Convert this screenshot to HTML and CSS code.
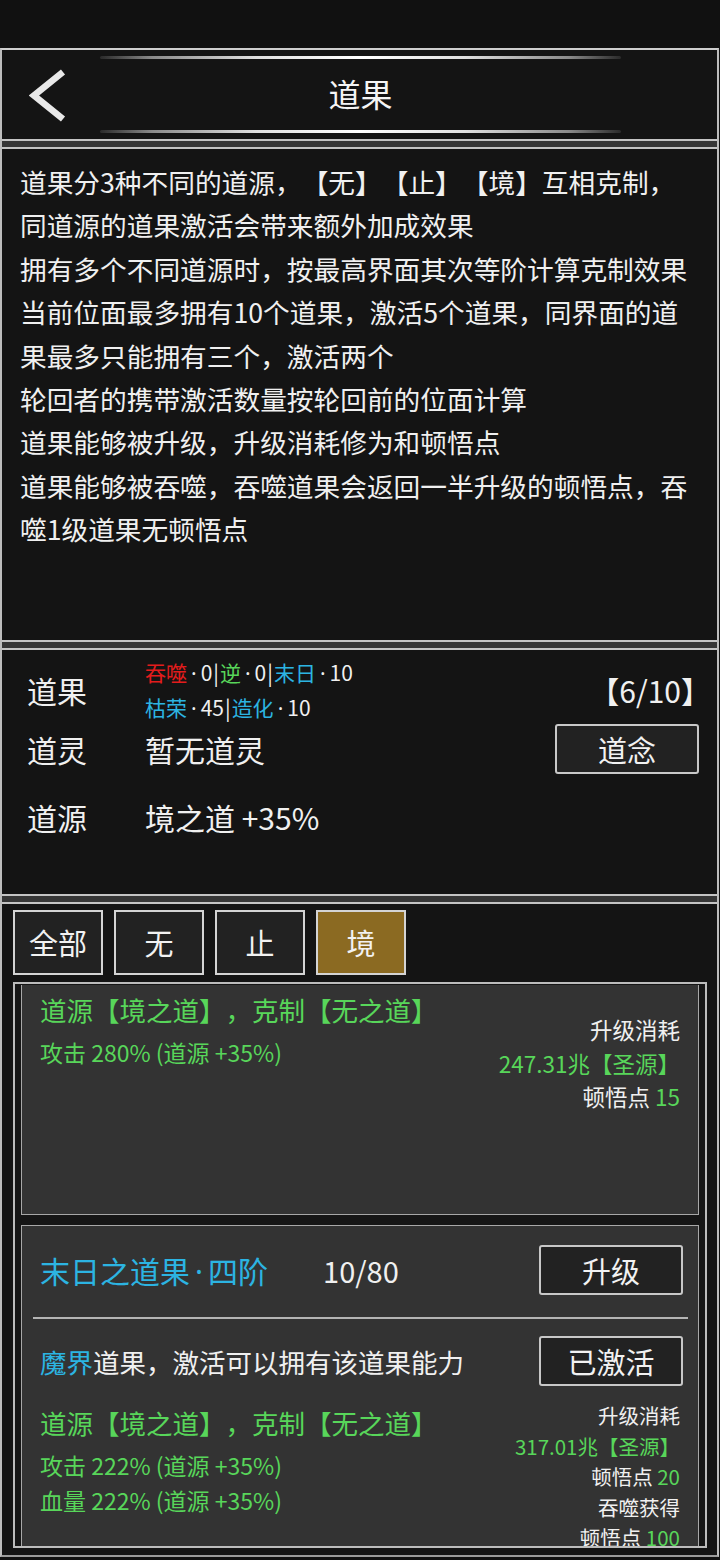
FILE: index.html
```html
<!DOCTYPE html>
<html lang="zh-CN">
<head>
<meta charset="utf-8">
<title>道果</title>
<link rel="stylesheet" href="styles.css">
</head>
<body>
<div class="status"></div>
<div class="frame">
  <header class="topbar">
    <svg class="back" width="40" height="60" viewBox="0 0 40 60">
      <polyline points="34,7 5,30.5 34,54" fill="none" stroke="#e8e8e8" stroke-width="6.5" stroke-linejoin="miter" stroke-linecap="butt"/>
    </svg>
    <div class="deco deco-top"></div>
    <h1 class="title">道果</h1>
    <div class="deco deco-bottom"></div>
  </header>
  <div class="sep"></div>
  <section class="intro">
    <p>道果分3种不同的道源，【无】【止】【境】互相克制，<br>同道源的道果激活会带来额外加成效果</p>
    <p>拥有多个不同道源时，按最高界面其次等阶计算克制效果</p>
    <p>当前位面最多拥有10个道果，激活5个道果，同界面的道<br>果最多只能拥有三个，激活两个</p>
    <p>轮回者的携带激活数量按轮回前的位面计算</p>
    <p>道果能够被升级，升级消耗修为和顿悟点</p>
    <p>道果能够被吞噬，吞噬道果会返回一半升级的顿悟点，吞<br>噬1级道果无顿悟点</p>
  </section>
  <div class="sep"></div>
  <section class="info">
    <div class="info-row row-fruit">
      <span class="label">道果</span>
      <div class="stats">
        <div><span class="red">吞噬</span><span class="dot">·</span>0<span class="bar">|</span><span class="green">逆</span><span class="dot">·</span>0<span class="bar">|</span><span class="cyan">末日</span><span class="dot">·</span>10</div>
        <div><span class="cyan">枯荣</span><span class="dot">·</span>45<span class="bar">|</span><span class="cyan">造化</span><span class="dot">·</span>10</div>
      </div>
      <span class="count">【6/10】</span>
    </div>
    <div class="info-row row-spirit">
      <span class="label">道灵</span>
      <span class="value">暂无道灵</span>
      <button class="btn">道念</button>
    </div>
    <div class="info-row row-source">
      <span class="label">道源</span>
      <span class="value">境之道 +35%</span>
    </div>
  </section>
  <div class="sep"></div>
  <section class="tabs">
    <button class="tab">全部</button>
    <button class="tab">无</button>
    <button class="tab">止</button>
    <button class="tab active">境</button>
  </section>
  <section class="list">
    <div class="card card-cut">
      <div class="detail">
        <div class="effects">
          <div class="eff-head">道源【境之道】，克制【无之道】</div>
          <div class="eff-line first">攻击 280% (道源 +35%)</div>
        </div>
        <div class="cost cost-lg">
          <div>升级消耗</div>
          <div class="green">247.31兆【圣源】</div>
          <div>顿悟点 <span class="green">15</span></div>
        </div>
      </div>
    </div>
    <div class="card">
      <div class="card-top">
        <span class="fruit-name">末日之道果<span class="tdot">·</span>四阶</span>
        <span class="level">10/80</span>
        <button class="btn">升级</button>
      </div>
      <div class="divider"></div>
      <div class="card-mid">
        <span class="desc"><span class="cyan">魔界</span>道果，激活可以拥有该道果能力</span>
        <button class="btn">已激活</button>
      </div>
      <div class="detail">
        <div class="effects">
          <div class="eff-head">道源【境之道】，克制【无之道】</div>
          <div class="eff-line first">攻击 222% (道源 +35%)</div>
          <div class="eff-line">血量 222% (道源 +35%)</div>
        </div>
        <div class="cost cost-sm">
          <div>升级消耗</div>
          <div class="green">317.01兆【圣源】</div>
          <div>顿悟点 <span class="green">20</span></div>
          <div>吞噬获得</div>
          <div>顿悟点 <span class="green">100</span></div>
        </div>
      </div>
    </div>
  </section>
</div>
</body>
</html>
```

FILE: styles.css
```css
* { box-sizing: border-box; }
html, body {
  margin: 0;
  padding: 0;
  background: #111111;
}
body {
  width: 720px;
  font-family: "Noto Sans CJK SC", "Noto Sans", sans-serif;
  color: #f0f0f0;
  text-spacing-trim: space-all;
}
p { margin: 0; }
button {
  font-family: inherit;
  color: #f2f2f2;
  padding: 0;
  cursor: pointer;
  text-spacing-trim: space-all;
}

.status { height: 48px; background: #111111; }

.frame {
  margin-right: 1px;
  border-top: 2px solid #cfcfcf;
  border-left: 2px solid #bdbdbd;
  border-right: 2px solid #bdbdbd;
  border-bottom: 2px solid #9a9a9a;
  background: #141414;
  padding-bottom: 7px;
}

/* header */
.topbar {
  height: 89px;
  display: grid;
  grid-template-columns: 98px 1fr 96px;
  grid-template-rows: 15px 1fr 15px;
  background: #141414;
}
.back {
  grid-column: 1;
  grid-row: 1 / 4;
  align-self: center;
  margin-left: 27px;
}
.deco {
  grid-column: 2;
  height: 3px;
  align-self: center;
  border-radius: 2px;
  background: linear-gradient(90deg, rgba(110,110,110,0.25) 0%, #8a8a8a 10%, #e0e0e0 30%, #ffffff 50%, #e0e0e0 70%, #8a8a8a 90%, rgba(110,110,110,0.25) 100%);
}
.deco-top { grid-row: 1; }
.deco-bottom { grid-row: 3; }
.title {
  grid-column: 2;
  grid-row: 2;
  margin: 0 0 3px 0;
  align-self: center;
  justify-self: center;
  font-size: 32px;
  font-weight: 400;
  line-height: 1;
  color: #f5f5f5;
}

.sep {
  height: 10px;
  background: #363636;
  border-top: 2px solid #c4c4c4;
  border-bottom: 2px solid #c4c4c4;
}

/* intro */
.intro {
  height: 491px;
  padding: 11px 0 0 18px;
  font-size: 26.7px;
  line-height: 43.4px;
  white-space: nowrap;
  color: #f0f0f0;
}

/* info */
.info {
  height: 244px;
  padding: 6px 18px 0 25px;
}
.info-row {
  display: flex;
  align-items: center;
  font-size: 30px;
}
.label {
  width: 118px;
  flex: none;
}
.value { flex: 1; }
.row-fruit { height: 68px; }
.row-spirit { height: 50px; }
.row-source { height: 50px; margin-top: 18px; }
.stats {
  flex: 1;
  font-size: 21px;
  line-height: 34px;
  white-space: nowrap;
}
.dot {
  font-family: "Noto Sans", sans-serif;
  margin: 0 4px;
}
.bar { margin: 0 1px; }
.count {
  font-size: 30px;
  margin-right: -12px;
}
.btn {
  width: 144px;
  height: 50px;
  flex: none;
  border: 2px solid #c8c8c8;
  border-radius: 3px;
  background: #222222;
  font-size: 29px;
  line-height: 1;
}

.red { color: #e31c1c; }
.green { color: #58d65a; }
.cyan { color: #2cb4e2; }

/* tabs */
.tabs {
  height: 78px;
  padding: 6px 0 0 11px;
  display: flex;
  gap: 11px;
}
.tab {
  width: 90px;
  height: 65px;
  border: 2px solid #d4d4d4;
  background: #222222;
  font-size: 29px;
  line-height: 1;
}
.tab.active { background: #8b6a22; }

/* list */
.list {
  height: 566px;
  margin: 0 10px 0 11px;
  border: 2px solid #bcbcbc;
  background: #161616;
  padding: 1px 6px 0 6px;
  overflow: hidden;
}
.card {
  background: #333333;
  border: 1px solid #a8a8a8;
  padding: 19px 15px 20px 18px;
  margin-top: 10px;
}
.card-cut {
  margin-top: 0;
  border-top: none;
  height: 230px;
  padding-top: 7px;
}
.detail {
  display: flex;
  justify-content: space-between;
  align-items: flex-start;
}
.effects { color: #58d65a; white-space: nowrap; }
.eff-head {
  font-size: 26.5px;
  line-height: 36px;
}
.eff-line {
  font-size: 23px;
  line-height: 35px;
}
.eff-line.first { margin-top: 7px; }
.cost {
  text-align: right;
  white-space: nowrap;
  margin-right: 3px;
  color: #f0f0f0;
}
.cost-lg {
  font-size: 22.5px;
  line-height: 33.5px;
  margin-top: 21px;
}
.cost-sm {
  font-size: 20.5px;
  line-height: 30.5px;
  margin-top: -5px;
}

.card-top, .card-mid {
  display: flex;
  align-items: center;
  height: 50px;
}
.fruit-name {
  color: #2cb4e2;
  font-size: 30px;
  white-space: nowrap;
}
.tdot {
  font-family: "Noto Sans", sans-serif;
  margin: 0 5px;
}
.level {
  flex: 1;
  margin-left: 55px;
  font-size: 29px;
}
.divider {
  height: 2px;
  background: #b4b4b4;
  margin: 22px -5px 17px -7px;
}
.desc {
  flex: 1;
  font-size: 26.5px;
  white-space: nowrap;
}
.card:not(.card-cut) .detail { margin-top: 19px; }
```
